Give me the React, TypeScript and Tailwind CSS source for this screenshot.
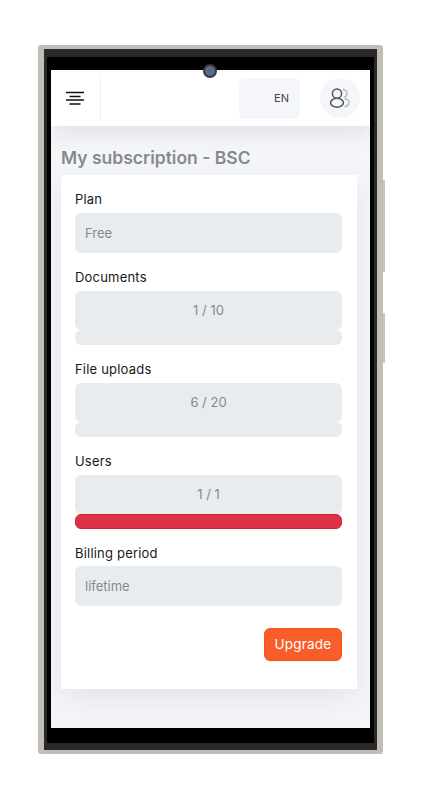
const fields = [
  { label: "Documents", value: "1 / 10", full: false },
  { label: "File uploads", value: "6 / 20", full: false },
  { label: "Users", value: "1 / 1", full: true },
];

const App = () => {
  return (
    <div className="min-h-[800px] bg-white pt-[45px] pl-[38px] font-['Inter',sans-serif] flex items-start">
      {/* Phone */}
      <div className="relative w-[345px] h-[709px] bg-[#c2bdb6] rounded-[3px] pt-[4px] pb-[4px] px-[6px]">
        <div className="h-full bg-[#2a2a2a] pt-[8px] px-[3px] pb-[7px]">
          <div className="h-full bg-black pt-[13px] pb-[15px] px-[4px] flex flex-col">
            <div className="flex-1 bg-[#f5f6f9] flex flex-col overflow-hidden">
              {/* Header */}
              <div className="h-[56px] bg-white flex items-center shadow-[0_6px_24px_rgba(90,90,130,0.14)] relative">
                <div className="w-[50px] h-[41px] flex items-center border-r border-[#eceef1] pl-[15px]">
                  <svg width="18" height="14" viewBox="0 0 18 14" fill="none" stroke="#111" strokeWidth="1.4">
                    <path d="M0 1.5h18M3.5 5.5h11M0 9h18M3.5 13h11" />
                  </svg>
                </div>
                <div className="ml-auto w-[61px] h-[41px] bg-[#f5f6fa] rounded-[6px] flex items-center justify-end pr-[11px] text-[11px] text-[#3f444b]">
                  EN
                </div>
                <div className="ml-[20px] mr-[10px] w-[40px] h-[40px] rounded-full bg-[#f5f6fa] flex items-center justify-center">
                  <svg width="20" height="20" viewBox="0 0 20 20" fill="none" stroke="#4b5058" strokeWidth="1.4">
                    <circle cx="7" cy="5.6" r="4.6" />
                    <ellipse cx="7" cy="14.8" rx="6.4" ry="4.4" />
                    <path stroke="#b4b8be" d="M12.5 1.6a4 4 0 0 1 4.5 4 4 4 0 0 1-3.2 3.8M14.5 11a3.8 3.8 0 0 1 4.5 3.8 3.8 3.8 0 0 1-4.5 3.6" />
                  </svg>
                </div>
              </div>

              {/* Content */}
              <div className="px-[10px] pt-[20px]">
                <h1 className="text-[17.5px] leading-[24px] font-semibold text-[#858a91] mb-[5px]">
                  My subscription - BSC
                </h1>
                <div className="w-[296px] h-[514px] bg-white shadow-[0_10px_30px_rgba(90,90,130,0.11)] pl-[14px] pr-[15px] pt-[16px] text-[13px]">
                  <p className="leading-[17px] text-[#16191d] tracking-[0.2px] mb-[5px]">Plan</p>
                  <div className="h-[40px] bg-[#e9ecef] rounded-[6px] flex items-center pl-[10px] pt-[1px] text-[#85898f]">
                    Free
                  </div>

                  {fields.map((item) => (
                    <div key={item.label} className="mt-[16px]">
                      <p className="leading-[17px] text-[#16191d] tracking-[0.2px] mb-[5px]">{item.label}</p>
                      <div
                        className={`h-[39px] bg-[#e9ecef] rounded-[6px] flex items-center justify-center text-[#85898f] ${
                          item.full ? "pt-[1px]" : ""
                        }`}
                      >
                        {item.value}
                      </div>
                      <div
                        className={`h-[15px] rounded-[6px] ${
                          item.full ? "bg-[#dc3247] border border-[#cf2338]" : "bg-[#e9ecef]"
                        }`}
                      ></div>
                    </div>
                  ))}

                  <p className="leading-[17px] text-[#16191d] tracking-[0.2px] mt-[16px] mb-[4px]">Billing period</p>
                  <div className="h-[40px] bg-[#e9ecef] rounded-[6px] flex items-center pl-[10px] pt-[1px] text-[#85898f]">
                    lifetime
                  </div>

                  <div className="flex justify-end mt-[22px]">
                    <button className="w-[78px] h-[33px] bg-[#f95d2a] border border-[#fb5313] rounded-[6px] text-white text-[13.5px] tracking-[0.2px]">
                      Upgrade
                    </button>
                  </div>
                </div>
              </div>
            </div>
          </div>
        </div>

        {/* Camera */}
        <div className="absolute left-[165px] top-[19px] w-[14px] h-[14px] rounded-full bg-[#566c89] border-[2px] border-[#37383c]"></div>
      </div>

      {/* Side buttons */}
      <div className="flex flex-col gap-[41px] pt-[135px]">
        <div className="w-[2px] h-[92px] bg-[#c9c5be]"></div>
        <div className="w-[2px] h-[50px] bg-[#c9c5be]"></div>
      </div>
    </div>
  );
};

export default App;
